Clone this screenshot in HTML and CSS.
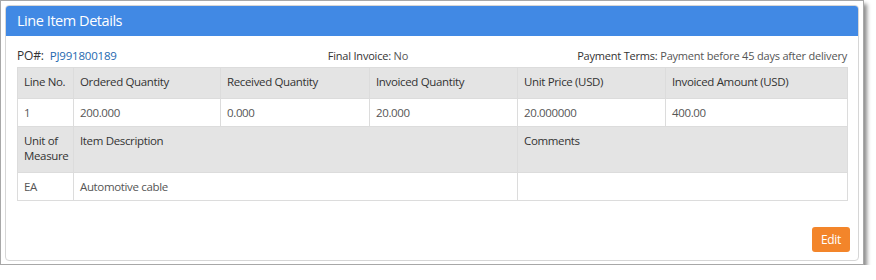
FILE: index.html
```html
<!DOCTYPE html>
<html>
<head>
<meta charset="utf-8">
<link rel="stylesheet" href="styles.css">
</head>
<body>
<div class="frame">
  <div class="card">
    <div class="card-header">Line Item Details</div>
    <div class="card-body">
      <div class="info-row">
        <div class="po"><span class="po-label">PO#:</span><a class="po-link">PJ991800189</a></div>
        <div class="final"><span class="label">Final Invoice:</span> <span class="value">No</span></div>
        <div class="terms"><span class="label">Payment Terms:</span> <span class="value">Payment before 45 days after delivery</span></div>
      </div>
      <table class="items">
        <colgroup>
          <col class="c1"><col class="c2"><col class="c3"><col class="c4"><col class="c5"><col class="c6">
        </colgroup>
        <tr class="head">
          <th>Line No.</th><th>Ordered Quantity</th><th>Received Quantity</th><th>Invoiced Quantity</th><th>Unit Price (USD)</th><th>Invoiced Amount (USD)</th>
        </tr>
        <tr class="data">
          <td>1</td><td>200.000</td><td>0.000</td><td>20.000</td><td>20.000000</td><td>400.00</td>
        </tr>
        <tr class="head tall">
          <th>Unit of Measure</th><th colspan="3">Item Description</th><th colspan="2">Comments</th>
        </tr>
        <tr class="data">
          <td>EA</td><td colspan="3">Automotive cable</td><td colspan="2"></td>
        </tr>
      </table>
      <div class="actions"><button class="btn-edit">Edit</button></div>
    </div>
  </div>
</div>
</body>
</html>
```

FILE: styles.css
```css
html, body {
  margin: 0;
  padding: 0;
  background: #ffffff;
}
body {
  font-family: "Open Sans", "Noto Sans", sans-serif;
  color: #333333;
}
.frame {
  width: 864px;
  height: 265px;
  border: 1px solid #a8a8a8;
  padding: 4px;
  box-sizing: border-box;
  box-shadow: 3px 4px 4px rgba(0, 0, 0, 0.45);
  background: #ffffff;
}
.card {
  height: 256px;
  box-sizing: border-box;
  border: 1px solid #d6d6d6;
  border-radius: 4px;
  display: flex;
  flex-direction: column;
}
.card-header {
  height: 30px;
  background: #4189e4;
  color: #ffffff;
  font-size: 14.5px;
  letter-spacing: -0.45px;
  line-height: 30px;
  padding-left: 11px;
  border-radius: 3px 3px 0 0;
}
.card-body {
  flex: 1;
  padding: 0 11px 8px 11px;
  display: flex;
  flex-direction: column;
}
.info-row {
  display: flex;
  justify-content: space-between;
  align-items: baseline;
  font-size: 11px;
  letter-spacing: -0.2px;
  height: 31px;
  padding-top: 12px;
  box-sizing: border-box;
  line-height: 16px;
}
.po-label {
  font-size: 12px;
  color: #333;
  margin-right: 6px;
}
.po-link {
  font-size: 11.5px;
  color: #2569b0;
}
.final {
  margin-left: 42px;
}
.label {
  color: #333;
}
.value {
  color: #555;
}
.items {
  width: 830px;
  border-collapse: collapse;
  table-layout: fixed;
  font-size: 11.5px;
  letter-spacing: -0.35px;
  line-height: 15px;
}
.c1 { width: 56px; }
.c2 { width: 147px; }
.c3 { width: 149px; }
.c4 { width: 148px; }
.c5 { width: 148px; }
.c6 { width: 182px; }
.items th, .items td {
  border: 1px solid #dcdcdc;
  text-align: left;
  vertical-align: top;
}
.items th {
  background: #e4e4e4;
  font-weight: normal;
  color: #333;
  padding: 6px 6px 9px 6px;
}
.items td {
  background: #ffffff;
  color: #555;
  padding: 6px 6px 6px 6px;
  height: 15px;
}
.actions {
  margin-top: auto;
  display: flex;
  justify-content: flex-end;
}
.btn-edit {
  width: 38px;
  height: 25px;
  border: none;
  border-radius: 3px;
  background: #f3852a;
  color: #ffffff;
  font-family: "Open Sans", "Noto Sans", sans-serif;
  font-size: 12px;
  letter-spacing: -0.3px;
  padding: 0;
  margin-right: -3px;
}
```
